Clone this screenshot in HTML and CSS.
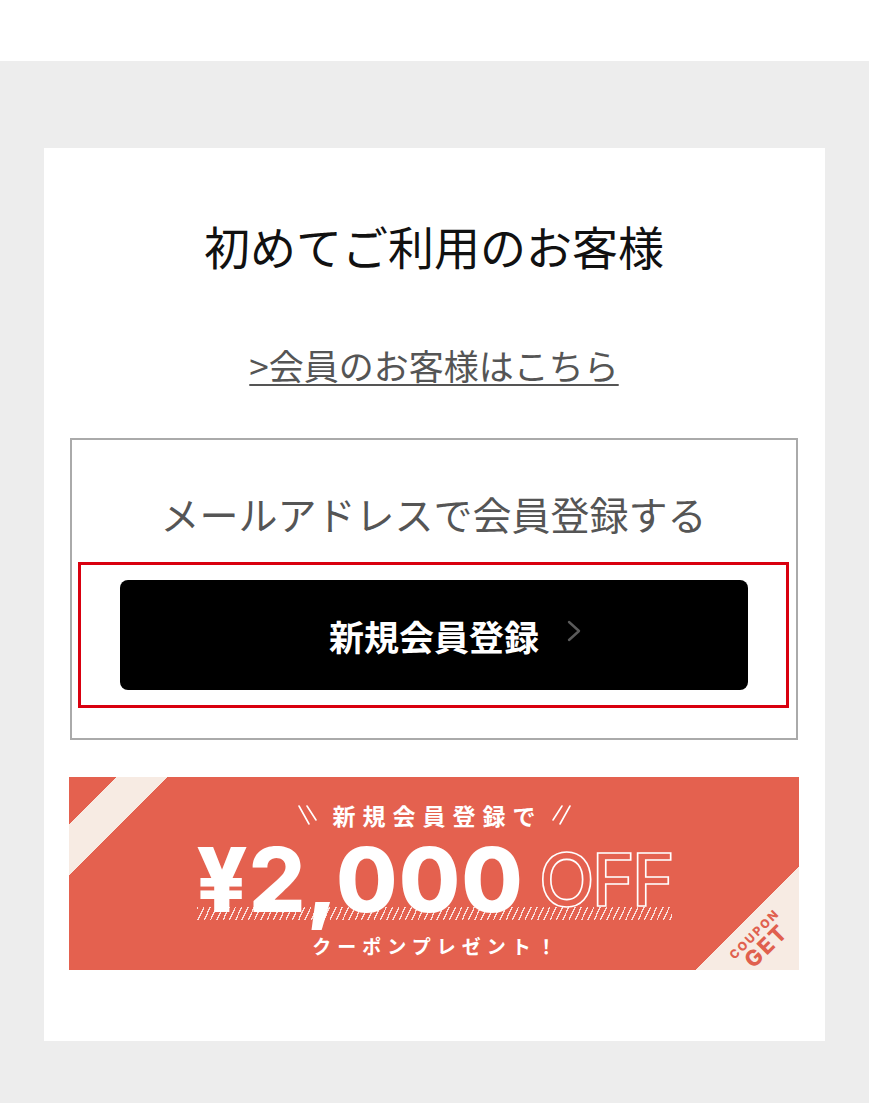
FILE: index.html
```html
<!DOCTYPE html>
<html lang="ja">
<head>
<meta charset="utf-8">
<title>初めてご利用のお客様</title>
<link rel="stylesheet" href="styles.css">
</head>
<body>
<div class="topbar"></div>
<main class="page">
  <section class="card">
    <h1 class="title">初めてご利用のお客様</h1>
    <a class="member-link" href="#">&gt;会員のお客様はこちら</a>
    <div class="register-box">
      <p class="register-lead">メールアドレスで会員登録する</p>
      <div class="highlight">
        <a class="btn-register" href="#">
          <span class="btn-label">新規会員登録</span>
          <svg class="chev" width="16" height="22" viewBox="0 0 16 22"><polyline points="3,2 13,11 3,20" fill="none" stroke="#5a5a5a" stroke-width="2.4" stroke-linecap="round" stroke-linejoin="round"/></svg>
        </a>
      </div>
    </div>
    <div class="banner">
      <div class="b-line1">
        <svg class="slash" width="22" height="24" viewBox="0 0 22 24"><line x1="2" y1="3" x2="12" y2="21" stroke="#fff" stroke-width="1.6" stroke-linecap="round"/><line x1="10" y1="3" x2="19" y2="17" stroke="#fff" stroke-width="1.6" stroke-linecap="round"/></svg>
        <span class="b-text">新規会員登録で</span>
        <svg class="slash mirror" width="22" height="24" viewBox="0 0 22 24"><line x1="2" y1="3" x2="12" y2="21" stroke="#fff" stroke-width="1.6" stroke-linecap="round"/><line x1="10" y1="3" x2="19" y2="17" stroke="#fff" stroke-width="1.6" stroke-linecap="round"/></svg>
      </div>
      <div class="b-price">
        <span class="yen">¥2,000</span><span class="off">OFF</span>
      </div>
      <div class="b-line3"><span class="b-text3">クーポンプレゼント！</span></div>
      <div class="coupon-tag"><span class="c1">COUPON</span><span class="c2">GET</span></div>
    </div>
  </section>
</main>
</body>
</html>
```

FILE: styles.css
```css
* { box-sizing: border-box; }
body {
  margin: 0;
  background: #ededed;
  font-family: "Noto Sans CJK JP", "Noto Sans", sans-serif;
}
.topbar {
  height: 61px;
  background: #fff;
}
.page {
  padding: 87px 44px 62px 44px;
}
.card {
  background: #fff;
  padding: 65px 27px 71px 26px;
  display: flex;
  flex-direction: column;
  align-items: center;
}
.title {
  margin: 0;
  font-size: 46px;
  font-weight: 400;
  line-height: 64px;
  color: #111;
}
.member-link {
  margin-top: 63px;
  font-size: 35px;
  line-height: 50px;
  color: #555;
  text-decoration: underline;
  text-decoration-thickness: 2px;
  text-underline-offset: 4px;
}
.register-box {
  align-self: stretch;
  margin-top: 48px;
  border: 2px solid #aaa;
  padding: 45px 7px 30px 6px;
}
.register-lead {
  margin: 0;
  text-align: center;
  font-size: 39px;
  line-height: 56px;
  color: #555;
}
.highlight {
  margin-top: 21px;
  border: 3px solid #d9000f;
  padding: 15px 38px 15px 39px;
}
.btn-register {
  display: flex;
  justify-content: center;
  align-items: center;
  gap: 27px;
  height: 110px;
  padding-left: 43px;
  background: #000;
  border-radius: 8px;
  color: #fff;
  text-decoration: none;
  font-size: 35px;
  font-weight: 700;
  line-height: 1;
}
.chev { display: block; margin-top: -8px; }

.banner {
  align-self: stretch;
  margin: 37px -1px 0;
  height: 193px;
  position: relative;
  overflow: hidden;
  white-space: nowrap;
  background: linear-gradient(135deg,
    #e4614f 0 33.9px,
    #f7ebe3 33.9px 69.3px,
    #e4614f 69.3px 579.8px,
    #f7ebe3 579.8px);
  display: flex;
  flex-direction: column;
  align-items: center;
  padding-top: 23px;
  color: #fff;
}
.b-line1 {
  display: flex;
  align-items: center;
  gap: 14px;
  font-size: 23px;
  font-weight: 700;
  line-height: 30px;
}
.b-text {
  letter-spacing: 7px;
  margin-right: -7px;
}
.slash { display: block; }
.slash.mirror { transform: scaleX(-1); }

.b-price {
  margin-top: 5px;
  height: 89px;
  display: flex;
  align-items: flex-end;
  gap: 15px;
  position: relative;
}
.b-price::before {
  content: "";
  position: absolute;
  left: 1px;
  right: 0;
  bottom: 4px;
  height: 13px;
  background: repeating-linear-gradient(115deg,
    rgba(255, 255, 255, 0.8) 0 1.3px,
    transparent 1.3px 5.7px);
}
.yen {
  position: relative;
  font-family: Inter, "Liberation Sans", sans-serif;
  font-weight: 800;
  font-size: 89px;
  line-height: 89px;
  letter-spacing: 1px;
}
.off {
  position: relative;
  font-family: Inter, "Liberation Sans", sans-serif;
  font-weight: 500;
  font-size: 73px;
  line-height: 1;
  letter-spacing: -3px;
  color: transparent;
  -webkit-text-stroke: 1.6px #fff;
  margin-bottom: 8px;
}
.b-line3 {
  margin-top: 9px;
  font-size: 19px;
  font-weight: 700;
  line-height: 26px;
}
.b-text3 {
  letter-spacing: 6px;
  margin-right: -6px;
}
.coupon-tag {
  position: absolute;
  left: 642px;
  top: 148px;
  width: 100px;
  display: flex;
  flex-direction: column;
  align-items: center;
  transform: rotate(-45deg);
  color: #e0604e;
  font-family: Inter, "Liberation Sans", sans-serif;
  font-weight: 800;
}
.c1 {
  font-size: 12px;
  line-height: 13px;
  letter-spacing: 2px;
  margin-right: -2px;
}
.c2 {
  font-size: 22px;
  line-height: 21px;
  letter-spacing: 2px;
  margin-right: -2px;
}
```
